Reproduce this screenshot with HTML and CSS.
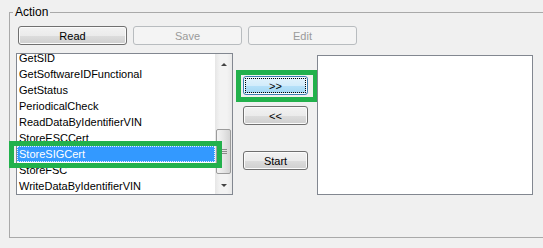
FILE: index.html
```html
<!DOCTYPE html>
<html lang="en">
<head>
  <meta charset="UTF-8" />
  <title>Action</title>
  <link rel="stylesheet" href="styles.css">
</head>
<body>

  <fieldset class="group">
    <legend>Action</legend>

    <div class="toolbar">
      <button class="btn">Read</button>
      <button class="btn" disabled>Save</button>
      <button class="btn" disabled>Edit</button>
    </div>

    <div class="main">
      <!-- Source list, scrolled to the bottom -->
      <div class="listbox source">
        <ul class="items">
          <li>GetSID</li>
          <li>GetSoftwareIDFunctional</li>
          <li>GetStatus</li>
          <li>PeriodicalCheck</li>
          <li>ReadDataByIdentifierVIN</li>
          <li>StoreESCCert</li>
          <li class="selected">StoreSIGCert</li>
          <li>StoreFSC</li>
          <li>WriteDataByIdentifierVIN</li>
        </ul>
        <div class="scrollbar">
          <div class="arrow"><span class="tri up"></span></div>
          <div class="track">
            <div class="thumb"><span class="grip"></span></div>
          </div>
          <div class="arrow"><span class="tri down"></span></div>
        </div>
        <div class="mark row-mark"></div>
      </div>

      <div class="moves">
        <button class="btn small hot marked">&gt;&gt;</button>
        <button class="btn small back">&lt;&lt;</button>
        <button class="btn small start">Start</button>
      </div>

      <!-- Target list -->
      <div class="listbox target"></div>
    </div>
  </fieldset>

</body>
</html>
```

FILE: styles.css
```css
body {
  margin: 0;
  background: #f0f0f0;
  font-family: "Liberation Sans", Arial, sans-serif;
  font-size: 11px;
  color: #000;
  overflow: hidden;
}

/* Group box */
.group {
  margin: 5px 0 0 9px;
  padding: 7px 0 42px 8px;
  width: 560px;
  border: 1px solid #a9a9a9;
  box-sizing: border-box;
}

.group legend {
  margin-left: -5px;
  padding: 0 2px;
  font-size: 12px;
  line-height: 14px;
}

.toolbar {
  display: flex;
  gap: 6px;
}

/* Buttons */
.btn {
  width: 109px;
  height: 19px;
  padding: 0;
  font: inherit;
  color: #000;
  border: 1px solid #707070;
  border-radius: 3px;
  background: linear-gradient(#f2f2f2 0%, #ebebeb 50%, #dddddd 51%, #cfcfcf 100%);
  box-shadow: inset 0 0 0 1px #fbfbfb;
}

.btn:disabled {
  border-color: #b8bcbf;
  background: #f4f4f4;
  color: #9a9a9a;
  box-shadow: none;
}

.btn.small {
  width: 65px;
}

.btn.hot {
  border-color: #3c7fb1;
  background: linear-gradient(#e3f3fc 0%, #d2ecfb 50%, #b6e1f9 51%, #a2d6f3 100%);
  outline: 1px dotted #000;
  outline-offset: -3px;
}

.main {
  display: flex;
  align-items: flex-start;
  margin-top: 8px;
}

/* List boxes */
.listbox {
  position: relative;
  border: 1px solid #828790;
  background: #fff;
}

.source {
  display: flex;
  margin-left: -2px;
  width: 217px;
  height: 142px;
  box-sizing: border-box;
}

.items {
  flex: 1;
  display: flex;
  flex-direction: column;
  justify-content: flex-end;
  margin: 0;
  padding: 0;
  list-style: none;
  overflow: hidden;
}

.items li {
  flex: none;
  height: 16px;
  line-height: 16px;
  padding-left: 2px;
  white-space: nowrap;
}

.items li.selected {
  background: #3399ff;
  color: #fff;
  outline: 1px dotted #e8f0ff;
  outline-offset: -1px;
}

/* Scrollbar */
.scrollbar {
  display: flex;
  flex-direction: column;
  width: 17px;
  background: linear-gradient(to right, #e6e6e6, #f3f3f3 30%, #f3f3f3 70%, #e9e9e9);
}

.arrow {
  height: 17px;
  display: flex;
  align-items: center;
  justify-content: center;
}

.tri {
  width: 0;
  height: 0;
  border-left: 3px solid transparent;
  border-right: 3px solid transparent;
}

.tri.up {
  border-bottom: 3px solid #444;
  margin-top: 4px;
}

.tri.down {
  border-top: 3px solid #444;
}

.track {
  flex: 1;
  padding-top: 58px;
}

.thumb {
  display: flex;
  align-items: center;
  justify-content: center;
  height: 45px;
  margin: 0 1px;
  border: 1px solid #9b9b9b;
  border-radius: 2px;
  box-sizing: border-box;
  background: linear-gradient(to right, #f4f4f4, #e6e6e6 50%, #d4d4d4);
}

.grip {
  width: 6px;
  height: 5px;
  background: repeating-linear-gradient(#8a8a8a 0 1px, transparent 1px 2px);
}

/* Annotation frames */
.mark,
.marked::after {
  position: absolute;
  border: 5px solid #22b14c;
}

.row-mark {
  top: 87px;
  left: -8px;
  width: 213px;
  height: 27px;
  box-sizing: border-box;
}

.moves {
  display: flex;
  flex-direction: column;
  margin-left: 10px;
  padding-top: 23px;
}

.marked {
  position: relative;
}

.marked::after {
  content: "";
  top: -7px;
  left: -8px;
  right: -11px;
  bottom: -8px;
}

.back {
  margin-top: 11px;
}

.start {
  margin-top: 26px;
}

.target {
  margin: 2px 0 0 9px;
  width: 216px;
  height: 140px;
  box-sizing: border-box;
}
```
